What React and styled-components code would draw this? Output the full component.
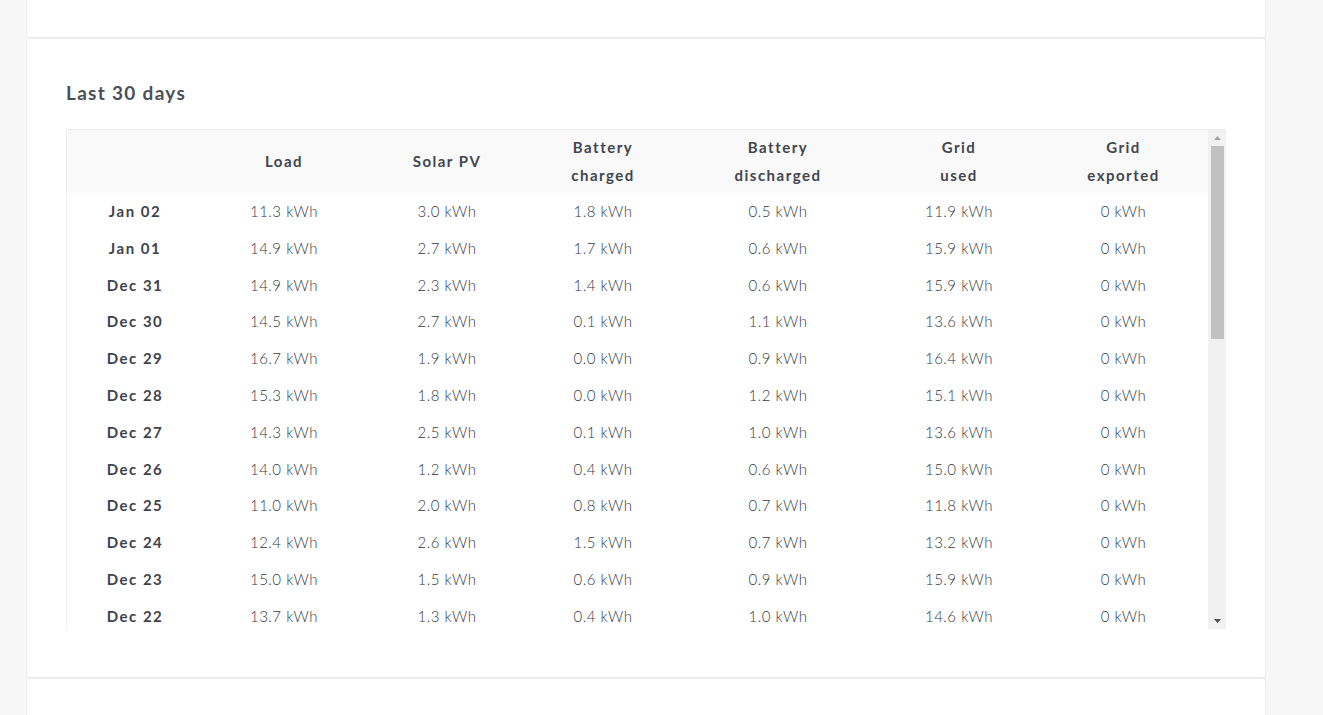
import React from "react";
import styled, { createGlobalStyle } from "styled-components";

const Global = createGlobalStyle`
  html, body { margin: 0; padding: 0; background: #f7f7f7; }
  body { font-family: Lato, "Liberation Sans", Arial, sans-serif; color: #464b53; }
`;

const Page = styled.div`
  padding-left: 26px;
  width: 1240px;
`;

const TopCard = styled.div`
  height: 37px;
  background: #fff;
  border: 1px solid #ececec;
  border-top: none;
  border-radius: 0 0 3px 3px;
`;

const Card = styled.section`
  background: #fff;
  border: 1px solid #ececec;
  border-radius: 3px;
  padding: 42px 39px 48px;
`;

const BottomCard = styled.div`
  height: 40px;
  background: #fff;
  border: 1px solid #ececec;
  border-bottom: none;
  border-radius: 3px 3px 0 0;
`;

const Title = styled.h3`
  margin: 0 0 24px;
  font-size: 19px;
  line-height: 24px;
  font-weight: 700;
  letter-spacing: 1.3px;
  color: #4a4f57;
`;

const TableFrame = styled.div`
  display: flex;
  height: 500px;
  border-top: 1px solid #eeeeee;
  border-left: 1px solid #eeeeee;
  box-sizing: border-box;
`;

const Scroller = styled.div`
  flex: 1;
  min-width: 0;
  overflow-y: auto;
  scrollbar-width: none;
  &::-webkit-scrollbar { display: none; }
`;

const ScrollTrack = styled.div`
  width: 18px;
  flex: 0 0 18px;
  background: #f1f1f1;
  display: flex;
  flex-direction: column;
  align-items: center;
`;

const ArrowButton = styled.div`
  height: 16px;
  flex: 0 0 16px;
  width: 100%;
  display: flex;
  align-items: center;
  justify-content: center;
`;

const Thumb = styled.div`
  width: 13px;
  margin-left: 1px;
  height: 193px;
  background: #c1c1c1;
`;

const Spacer = styled.div`
  flex: 1;
`;

const Table = styled.table`
  width: 100%;
  border-collapse: collapse;
  table-layout: fixed;
`;

const Th = styled.th`
  position: sticky;
  top: 0;
  background: #f9f9f9;
  box-sizing: border-box;
  height: 63px;
  padding: 0 6px 2px;
  font-size: 15px;
  line-height: 28px;
  font-weight: 700;
  letter-spacing: 1.5px;
  color: #41464e;
  text-align: center;
  vertical-align: middle;
`;

const Td = styled.td`
  padding: 8px 6px;
  line-height: 20.8px;
  font-size: 15px;
  text-align: center;
  letter-spacing: ${(p) => (p.$date ? "1.5px" : "0.5px")};
  font-weight: ${(p) => (p.$date ? 700 : 300)};
  color: ${(p) => (p.$date ? "#3f444c" : "#353a41")};
  white-space: nowrap;
`;

const cols = [136, 162, 164, 148, 202, 160, 169];

const headers = [
  [""],
  ["Load"],
  ["Solar PV"],
  ["Battery", "charged"],
  ["Battery", "discharged"],
  ["Grid", "used"],
  ["Grid", "exported"],
];

const rows = [
  ["Jan 02", "11.3", "3.0", "1.8", "0.5", "11.9"],
  ["Jan 01", "14.9", "2.7", "1.7", "0.6", "15.9"],
  ["Dec 31", "14.9", "2.3", "1.4", "0.6", "15.9"],
  ["Dec 30", "14.5", "2.7", "0.1", "1.1", "13.6"],
  ["Dec 29", "16.7", "1.9", "0.0", "0.9", "16.4"],
  ["Dec 28", "15.3", "1.8", "0.0", "1.2", "15.1"],
  ["Dec 27", "14.3", "2.5", "0.1", "1.0", "13.6"],
  ["Dec 26", "14.0", "1.2", "0.4", "0.6", "15.0"],
  ["Dec 25", "11.0", "2.0", "0.8", "0.7", "11.8"],
  ["Dec 24", "12.4", "2.6", "1.5", "0.7", "13.2"],
  ["Dec 23", "15.0", "1.5", "0.6", "0.9", "15.9"],
  ["Dec 22", "13.7", "1.3", "0.4", "1.0", "14.6"],
  ["Dec 21", "14.2", "1.6", "0.5", "0.8", "14.9"],
  ["Dec 20", "13.9", "2.1", "0.9", "0.7", "14.1"],
  ["Dec 19", "15.6", "1.4", "0.3", "1.1", "15.4"],
  ["Dec 18", "12.8", "2.4", "1.2", "0.6", "12.9"],
  ["Dec 17", "14.1", "1.7", "0.6", "0.9", "14.5"],
  ["Dec 16", "16.2", "1.1", "0.2", "1.0", "16.5"],
  ["Dec 15", "13.4", "2.2", "1.0", "0.8", "13.6"],
  ["Dec 14", "12.6", "2.9", "1.6", "0.5", "12.8"],
  ["Dec 13", "15.1", "1.5", "0.4", "1.1", "15.3"],
  ["Dec 12", "14.7", "1.9", "0.7", "0.9", "14.9"],
  ["Dec 11", "13.3", "2.3", "1.1", "0.6", "13.5"],
  ["Dec 10", "15.8", "1.2", "0.1", "1.2", "16.0"],
  ["Dec 09", "14.4", "1.8", "0.6", "0.8", "14.7"],
  ["Dec 08", "12.9", "2.6", "1.3", "0.7", "13.0"],
  ["Dec 07", "13.8", "2.0", "0.8", "0.9", "14.0"],
  ["Dec 06", "15.4", "1.4", "0.3", "1.0", "15.7"],
  ["Dec 05", "14.6", "1.7", "0.5", "0.9", "14.8"],
  ["Dec 04", "13.5", "2.2", "1.0", "0.7", "13.7"],
];

const Arrow = ({ up, color }) => (
  <svg width="7" height="4" viewBox="0 0 7 4">
    <path d={up ? "M0 4 L3.5 0 L7 4 Z" : "M0 0 L7 0 L3.5 4 Z"} fill={color} />
  </svg>
);

export default function App() {
  return (
    <>
      <Global />
      <Page>
        <TopCard />
        <Card>
          <Title>Last 30 days</Title>
          <TableFrame>
            <Scroller>
              <Table>
                <colgroup>
                  {cols.map((w, i) => (
                    <col key={i} style={{ width: w }} />
                  ))}
                </colgroup>
                <thead>
                  <tr>
                    {headers.map((h, i) => (
                      <Th key={i}>
                        {h.map((line, j) => (
                          <React.Fragment key={j}>
                            {j > 0 && <br />}
                            {line}
                          </React.Fragment>
                        ))}
                      </Th>
                    ))}
                  </tr>
                </thead>
                <tbody>
                  {rows.map((r) => (
                    <tr key={r[0]}>
                      <Td $date>{r[0]}</Td>
                      {r.slice(1).map((v, i) => (
                        <Td key={i}>{v} kWh</Td>
                      ))}
                      <Td>0 kWh</Td>
                    </tr>
                  ))}
                </tbody>
              </Table>
            </Scroller>
            <ScrollTrack>
              <ArrowButton>
                <Arrow up color="#a3a3a3" />
              </ArrowButton>
              <Thumb />
              <Spacer />
              <ArrowButton>
                <Arrow color="#505050" />
              </ArrowButton>
            </ScrollTrack>
          </TableFrame>
        </Card>
        <BottomCard />
      </Page>
    </>
  );
}
